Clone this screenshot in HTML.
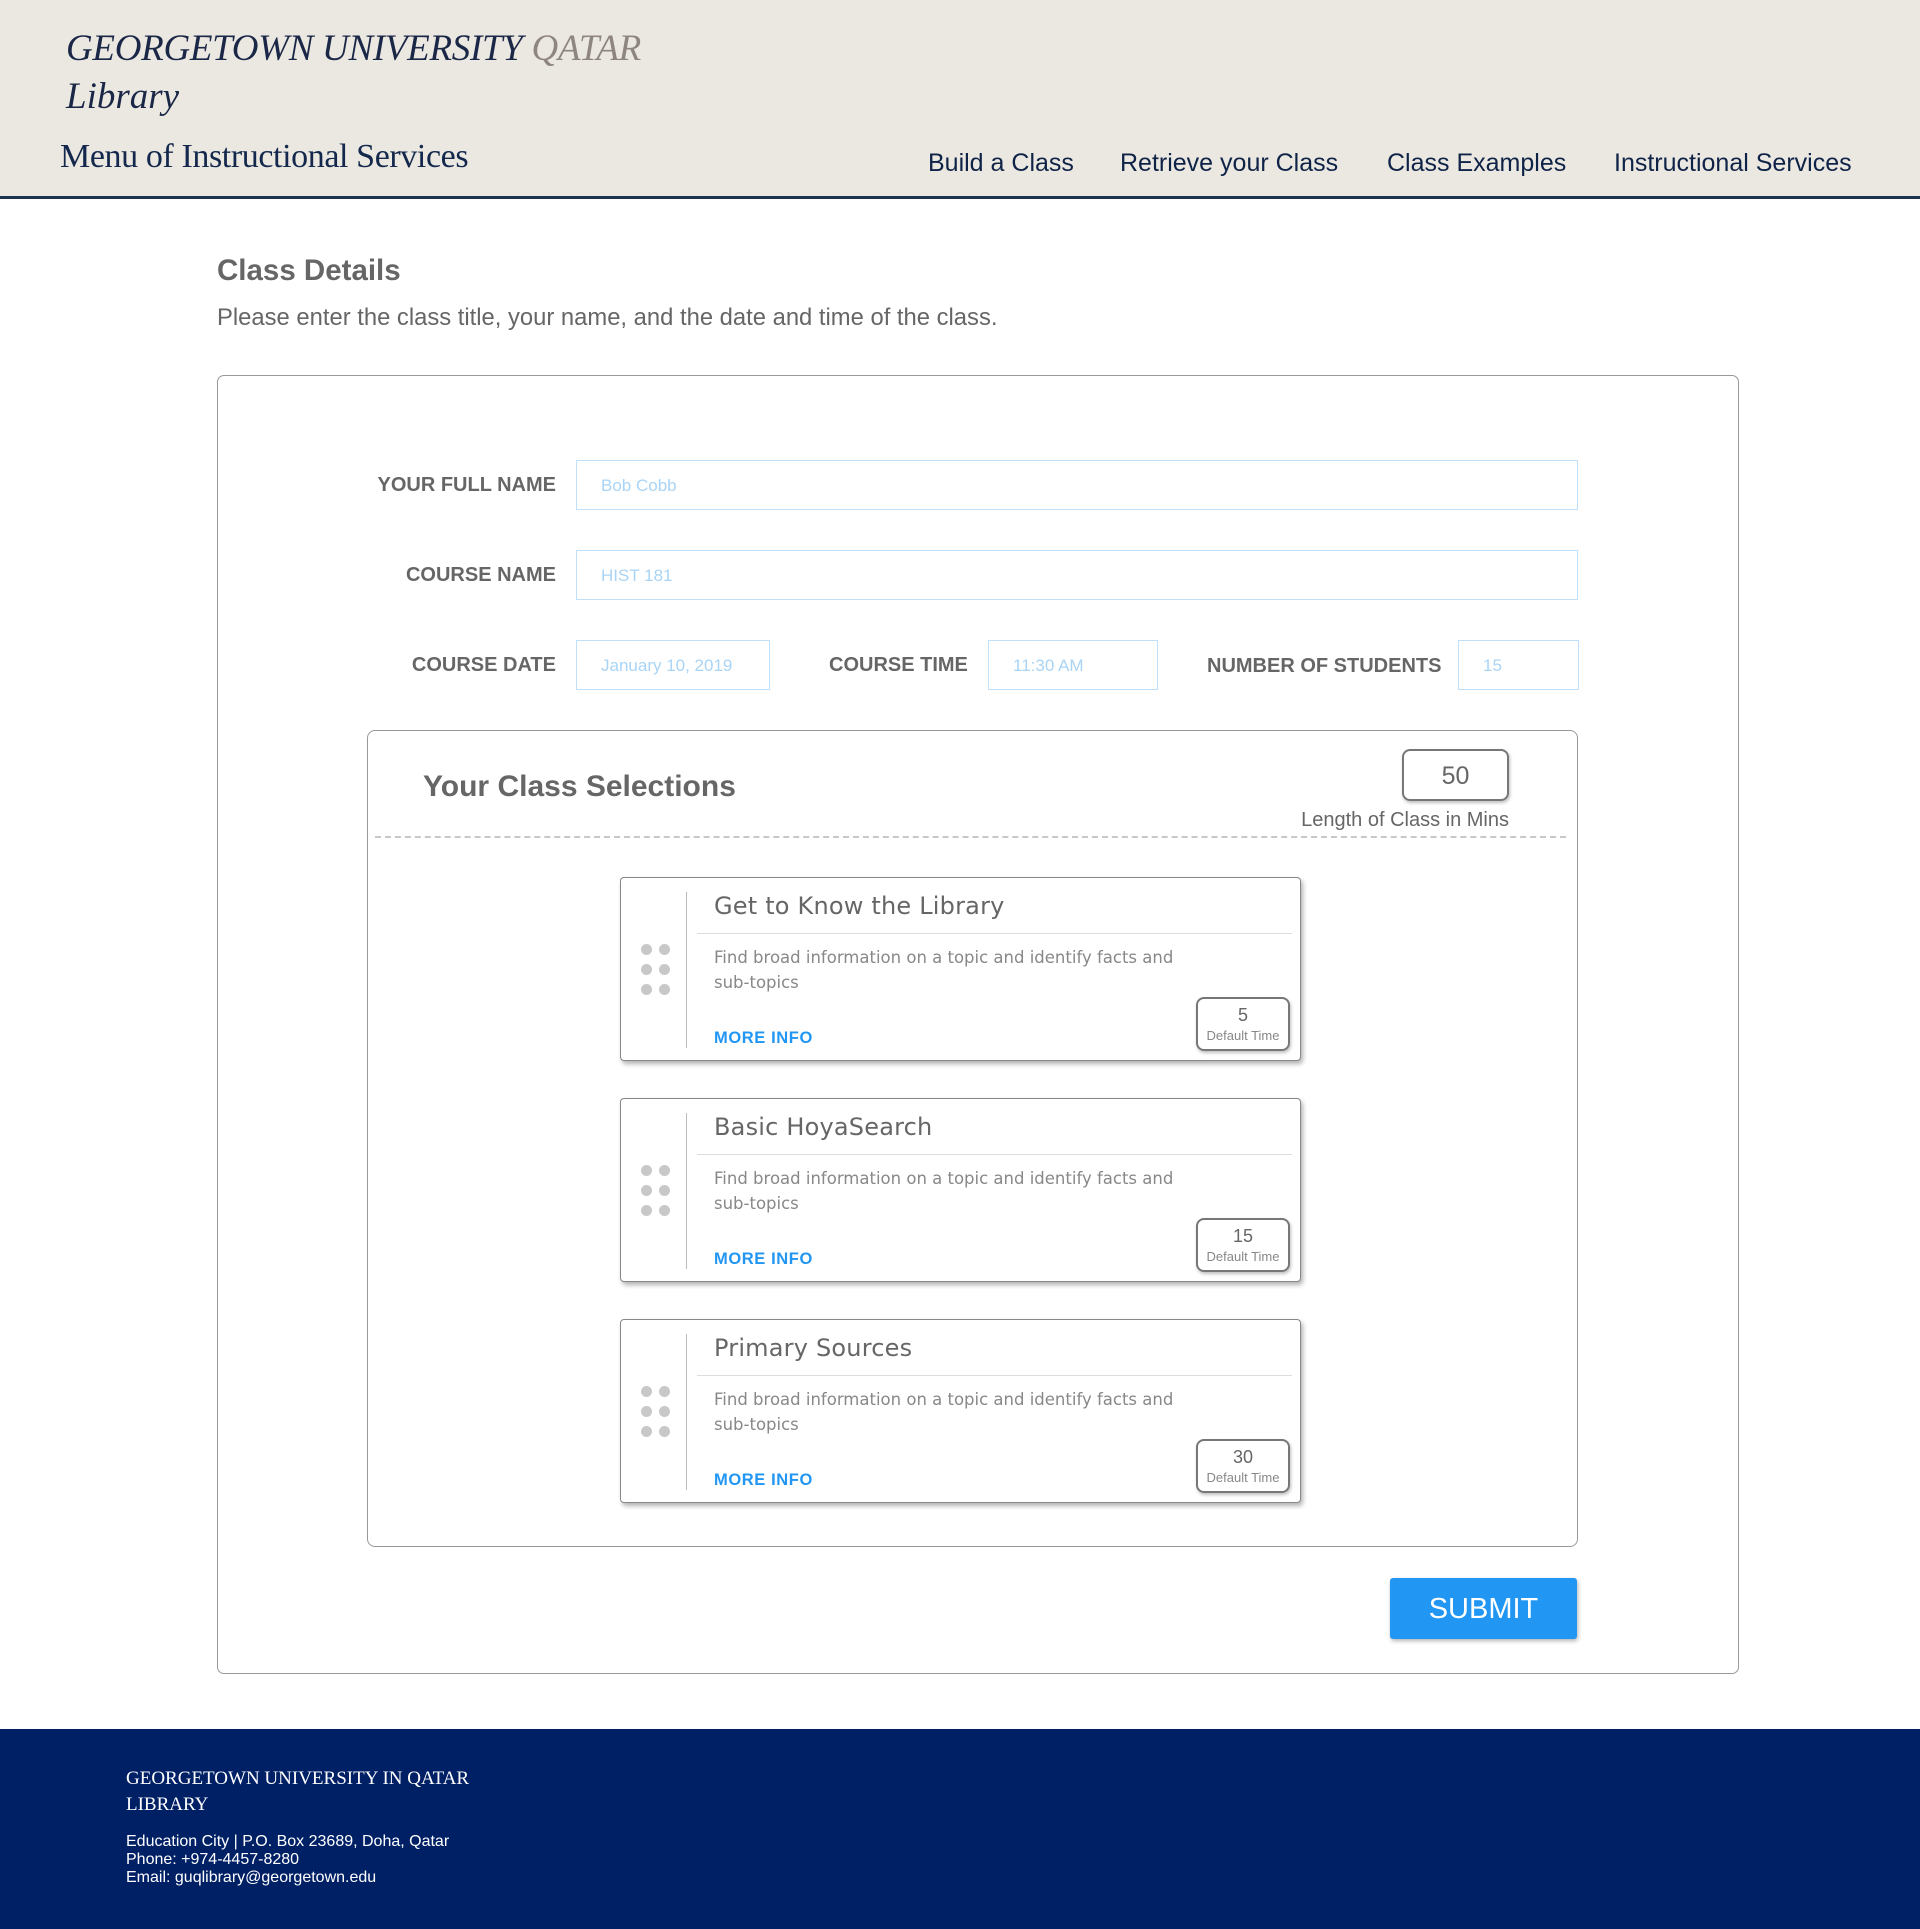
<!DOCTYPE html>
<html><head><meta charset="utf-8"><style>
*{box-sizing:border-box;margin:0;padding:0}
body{width:1920px;height:1929px;position:relative;background:#fff;font-family:"Liberation Sans",sans-serif;overflow:hidden}
.a{position:absolute;white-space:nowrap}
.hdr{position:absolute;left:0;top:0;width:1920px;height:199px;background:#ebe8e2;border-bottom:3px solid #1d3352}
.serif{font-family:"Liberation Serif",serif}
.nav{top:149px;font-size:25px;color:#0f2347}
.lbl{font-size:20px;font-weight:bold;color:#666;text-align:right}
.inp{position:absolute;border:1px solid #bfe0fb;height:50px;padding-left:24px;line-height:50px;font-size:17px;color:#a9d4f5}
.card{position:absolute;left:620px;width:681px;height:184px;border:1px solid #888;border-radius:4px;box-shadow:2px 3px 5px rgba(0,0,0,.3);background:#fff}
.card .vl{position:absolute;left:65px;top:14px;width:1px;height:156px;background:#bbb}
.card .sep{position:absolute;left:76px;right:8px;top:55px;height:1px;background:#ddd}
.card .t{position:absolute;left:93px;top:14px;font-size:24px;color:#666;font-family:"DejaVu Sans","Liberation Sans",sans-serif;font-weight:normal;letter-spacing:0.2px}
.card .d{position:absolute;left:93px;top:67px;width:480px;font-size:16.5px;line-height:25px;color:#888;font-family:"DejaVu Sans",sans-serif;white-space:normal}
.card .m{position:absolute;left:93px;top:151px;font-size:16.5px;font-weight:bold;color:#2196f3;letter-spacing:0.6px}
.card .dt{position:absolute;left:575px;top:119px;width:94px;height:54px;border:2px solid #777;border-radius:8px;text-align:center;box-shadow:1px 2px 3px rgba(0,0,0,.25)}
.card .dt b{display:block;font-weight:normal;font-size:18px;color:#666;margin-top:6px}
.card .dt i{display:block;font-style:normal;font-size:13px;color:#888;margin-top:2px}
.dot{position:absolute;width:11px;height:11px;border-radius:50%;background:#c8c8c8}
.ft{color:#fff}
</style></head><body>
<div class="hdr">
 <div class="a serif" style="left:66px;top:27px;font-size:37px;font-style:italic;color:#1b2746;letter-spacing:-0.3px">GEORGETOWN UNIVERSITY <span style="color:#8f8580">QATAR</span></div>
 <div class="a serif" style="left:66px;top:75px;font-size:37px;font-style:italic;color:#1b2746">Library</div>
 <div class="a serif" style="left:60px;top:138px;font-size:34px;color:#13284c;letter-spacing:-0.4px">Menu of Instructional Services</div>
 <div class="a nav" style="left:928px">Build a Class</div>
 <div class="a nav" style="left:1120px">Retrieve your Class</div>
 <div class="a nav" style="left:1387px">Class Examples</div>
 <div class="a nav" style="left:1614px">Instructional Services</div>
</div>
<div class="a" style="left:217px;top:254px;font-size:29.5px;font-weight:bold;color:#666">Class Details</div>
<div class="a" style="left:217px;top:304px;font-size:23.8px;color:#666">Please enter the class title, your name, and the date and time of the class.</div>
<div style="position:absolute;left:217px;top:375px;width:1522px;height:1299px;border:1px solid #999;border-radius:7px"></div>

<div class="a lbl" style="left:300px;width:256px;top:474px">YOUR FULL NAME</div>
<div class="inp" style="left:576px;top:460px;width:1002px">Bob Cobb</div>
<div class="a lbl" style="left:300px;width:256px;top:564px">COURSE NAME</div>
<div class="inp" style="left:576px;top:550px;width:1002px">HIST 181</div>
<div class="a lbl" style="left:300px;width:256px;top:654px">COURSE DATE</div>
<div class="inp" style="left:576px;top:640px;width:194px">January 10, 2019</div>
<div class="a lbl" style="left:829px;top:654px">COURSE TIME</div>
<div class="inp" style="left:988px;top:640px;width:170px">11:30 AM</div>
<div class="a lbl" style="left:1207px;top:655px">NUMBER OF STUDENTS</div>
<div class="inp" style="left:1458px;top:640px;width:121px">15</div>

<div style="position:absolute;left:367px;top:730px;width:1211px;height:817px;border:1px solid #999;border-radius:8px"></div>
<div class="a" style="left:423px;top:770px;font-size:30px;font-weight:bold;color:#666">Your Class Selections</div>
<div style="position:absolute;left:1402px;top:749px;width:107px;height:52px;border:2px solid #777;border-radius:8px;box-shadow:1px 2px 3px rgba(0,0,0,.25);text-align:center;font-size:25px;line-height:50px;color:#666">50</div>
<div class="a" style="left:1250px;width:259px;text-align:right;top:809px;font-size:20px;color:#666">Length of Class in Mins</div>
<div style="position:absolute;left:375px;top:836px;width:1191px;border-top:2px dashed #c8c8c8"></div>

<div class="card" style="top:877px"><div class="vl"></div><div class="sep"></div>
<div class="dot" style="left:20px;top:66px"></div><div class="dot" style="left:38px;top:66px"></div><div class="dot" style="left:20px;top:86px"></div><div class="dot" style="left:38px;top:86px"></div><div class="dot" style="left:20px;top:106px"></div><div class="dot" style="left:38px;top:106px"></div>
<div class="t">Get to Know the Library</div><div class="d">Find broad information on a topic and identify facts and sub-topics</div><div class="m">MORE INFO</div><div class="dt"><b>5</b><i>Default Time</i></div></div>
<div class="card" style="top:1098px"><div class="vl"></div><div class="sep"></div>
<div class="dot" style="left:20px;top:66px"></div><div class="dot" style="left:38px;top:66px"></div><div class="dot" style="left:20px;top:86px"></div><div class="dot" style="left:38px;top:86px"></div><div class="dot" style="left:20px;top:106px"></div><div class="dot" style="left:38px;top:106px"></div>
<div class="t">Basic HoyaSearch</div><div class="d">Find broad information on a topic and identify facts and sub-topics</div><div class="m">MORE INFO</div><div class="dt"><b>15</b><i>Default Time</i></div></div>
<div class="card" style="top:1319px"><div class="vl"></div><div class="sep"></div>
<div class="dot" style="left:20px;top:66px"></div><div class="dot" style="left:38px;top:66px"></div><div class="dot" style="left:20px;top:86px"></div><div class="dot" style="left:38px;top:86px"></div><div class="dot" style="left:20px;top:106px"></div><div class="dot" style="left:38px;top:106px"></div>
<div class="t">Primary Sources</div><div class="d">Find broad information on a topic and identify facts and sub-topics</div><div class="m">MORE INFO</div><div class="dt"><b>30</b><i>Default Time</i></div></div>

<div style="position:absolute;left:1390px;top:1578px;width:187px;height:61px;background:#2196f3;border-radius:3px;box-shadow:1px 2px 4px rgba(0,0,0,.3);color:#fff;font-size:29px;text-align:center;line-height:63px">SUBMIT</div>

<div style="position:absolute;left:0;top:1729px;width:1920px;height:200px;background:#002066"></div>
<div class="a serif ft" style="left:126px;top:1768px;font-size:19px">GEORGETOWN UNIVERSITY IN QATAR</div>
<div class="a serif ft" style="left:126px;top:1794px;font-size:19px">LIBRARY</div>
<div class="a ft" style="left:126px;top:1833px;font-size:16px;line-height:18px">Education City | P.O. Box 23689, Doha, Qatar<br>Phone: +974-4457-8280<br>Email: guqlibrary@georgetown.edu</div>
</body></html>
